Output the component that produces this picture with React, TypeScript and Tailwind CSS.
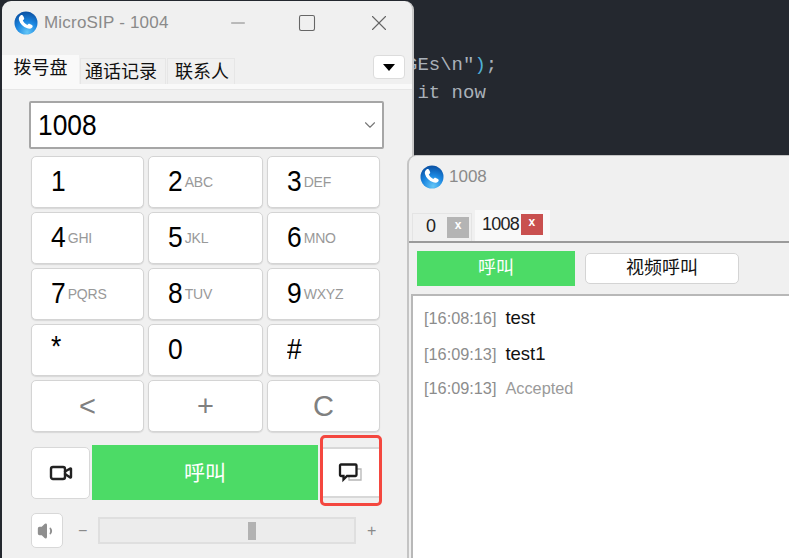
import React from 'react';
import { Minus, Square, X, ChevronDown, Video, Volume1 } from 'lucide-react';

const keys = [
  { n: '1', s: '' },
  { n: '2', s: 'ABC' },
  { n: '3', s: 'DEF' },
  { n: '4', s: 'GHI' },
  { n: '5', s: 'JKL' },
  { n: '6', s: 'MNO' },
  { n: '7', s: 'PQRS' },
  { n: '8', s: 'TUV' },
  { n: '9', s: 'WXYZ' },
  { n: '*', s: '' },
  { n: '0', s: '' },
  { n: '#', s: '' },
];

const font = 'font-["Liberation_Sans","Noto_Sans_CJK_SC",sans-serif]';

const PhoneLogo = ({ size = 24 }: { size?: number }) => (
  <svg width={size} height={size} viewBox="0 0 24 24" className="shrink-0">
    <defs>
      <radialGradient id="ball" cx="55%" cy="90%" r="85%">
        <stop offset="0%" stopColor="#63c6f7" />
        <stop offset="55%" stopColor="#1b86e0" />
        <stop offset="100%" stopColor="#0c55a8" />
      </radialGradient>
    </defs>
    <circle cx="12" cy="12" r="11.5" fill="url(#ball)" />
    <path d="M6.500 4.500c1-.8 2.200-.5 2.700.5l.9 1.900c.3.700.1 1.300-.5 1.800l-.8.600c.8 2 2.400 3.700 4.500 4.700l.8-.8c.5-.5 1.200-.6 1.800-.3l2 1.100c.9.500 1.100 1.700.3 2.500-1.200 1.300-3 1.600-4.900.8C9 16 6 12.800 5 9.100c-.5-1.800.1-3.500 1.500-4.600z" fill="#fff" />
  </svg>
);

const KeyButton = ({ n, s }: { n: string; s: string }) => (
  <button className="h-[52px] bg-white border border-[#d4d4d4] rounded-[5px] flex items-center pl-[19px] shadow-[0_1px_1px_#d8d8d8]">
    <span className={`inline-block origin-left scale-x-[0.88] text-[30px] leading-none text-black ${n === '*' ? '-mt-[8px]' : '-mt-[2px]'}`}>{n}</span>
    {s && <span className="text-[14px] text-[#999] tracking-[-0.2px]">{s}</span>}
  </button>
);

const DialerWindow = () => (
  <div className="absolute left-[2px] top-[1px] w-[412px] h-[557px] bg-[#f0f0f0] rounded-t-[9px] border-r-2 border-[#c9c9c9] overflow-hidden">
    <div className="h-[46px] flex items-center pl-[12px] pb-[2px]">
      <PhoneLogo />
      <span className="text-[17px] text-[#8a8a8a] ml-[6px] tracking-[0.2px]">MicroSIP - 1004</span>
      <Minus size={22} strokeWidth={1} className="text-[#7a7a7a] ml-[58px]" />
      <Square size={20} strokeWidth={1.3} className="text-[#666] ml-[48px]" />
      <X size={26} strokeWidth={1} className="text-[#666] ml-[49px]" />
    </div>

    <div className="h-[37px] flex items-end">
      <div className="w-[77px] h-[29px] pb-[3px] bg-[#f9f9f9] flex items-center justify-center text-[18px] text-[#111]">拨号盘</div>
      <div className="w-[86px] h-[26px] ml-[1px] pr-[4px] pt-[1px] bg-[#f0f0f0] border-t border-x border-[#e6e6e6] flex items-center justify-center text-[18px] text-[#111]">通话记录</div>
      <div className="w-[68px] h-[26px] ml-[1px] pl-[2px] pt-[1px] bg-[#f0f0f0] border-t border-x border-[#e6e6e6] flex items-center justify-center text-[18px] text-[#111]">联系人</div>
      <button className="ml-auto mr-[7px] mb-[5px] w-[32px] h-[24px] bg-white border border-[#dcdcdc] rounded-[4px] flex items-center justify-center">
        <span className="w-0 h-0 border-x-[6px] border-x-transparent border-t-[7px] border-t-black" />
      </button>
    </div>
    <div className="h-[6px] bg-[#f9f9f9] border-b border-[#e6e6e6]" />

    <div className="pl-[27px] pt-[11px]">
      <div className="w-[355px] h-[48px] bg-white border-2 border-[#a6a6a6] rounded-[2px] flex items-center justify-between pl-[7px] pr-[3px]">
        <span className="inline-block origin-left scale-x-[0.88] text-[30px] leading-none text-black">1008</span>
        <ChevronDown size={18} strokeWidth={1.5} className="text-[#777]" />
      </div>
    </div>

    <div className="pl-[29px] pt-[7px] w-[380px] grid grid-cols-[113px_115px_113px] gap-x-[4px] gap-y-[4px]">
      {keys.map((k) => (
        <KeyButton key={k.n} n={k.n} s={k.s} />
      ))}
      {['<', '+', 'C'].map((k) => (
        <button key={k} className="h-[52px] bg-white border border-[#d4d4d4] rounded-[5px] flex items-center justify-center text-[29px] leading-none text-[#808080] shadow-[0_1px_1px_#d8d8d8]">
          {k}
        </button>
      ))}
    </div>

    <div className="pl-[29px] pt-[13px] flex items-center h-[68px]">
      <button className="w-[59px] h-[52px] bg-white border border-[#d8d8d8] rounded-[5px] flex items-center justify-center">
        <Video size={24} strokeWidth={2.4} className="text-[#222]" />
      </button>
      <button className="w-[226px] h-[55px] ml-[2px] bg-[#4cdb66] text-white text-[21px] flex items-center justify-center">呼叫</button>
      <div className="relative ml-[5px] w-[56px] h-[51px] bg-white border-y-2 border-[#d8d8d8] flex items-center justify-center">
        <svg width="26" height="24" viewBox="0 0 26 24" fill="none">
          <path d="M18 8h5v11H11v-3" stroke="#b5b5b5" strokeWidth="1.3" />
          <path d="M3 3.500h14.500a1 1 0 0 1 1 1V14a1 1 0 0 1-1 1H9l-3.500 3.500V15H3a1 1 0 0 1-1-1V4.500a1 1 0 0 1 1-1z" fill="#fff" stroke="#1c1c1c" strokeWidth="2.300" />
        </svg>
        <div className="absolute -left-[3px] -top-[14px] w-[62px] h-[71px] border-[3px] border-[#f4473f] rounded-[5px]" />
      </div>
    </div>

    <div className="pl-[29px] pt-[13px] flex items-center">
      <button className="w-[32px] h-[35px] bg-white border border-[#d8d8d8] rounded-[5px] flex items-center justify-center">
        <Volume1 size={20} fill="#8f8f8f" className="text-[#8f8f8f]" />
      </button>
      <span className="text-[16px] text-[#8a8a8a] ml-[15px] w-[20px]">−</span>
      <div className="w-[258px] h-[27px] bg-[#ececec] border-2 border-[#dfdfdf] flex items-center pl-[148px]">
        <span className="w-[8px] h-[18px] bg-[#b2b2b2]" />
      </div>
      <span className="text-[16px] text-[#8a8a8a] ml-[11px]">+</span>
    </div>
  </div>
);

const MessageWindow = () => (
  <div className="absolute left-[407px] top-[155px] w-[382px] h-[403px] bg-[#f0f0f0] rounded-tl-[9px] border-l-2 border-t border-[#c4c4c4] overflow-hidden">
    <div className="h-[44px] flex items-center pl-[11px] pb-[3px]">
      <PhoneLogo />
      <span className="text-[17px] text-[#8a8a8a] ml-[5px]">1008</span>
    </div>
    <div className="h-[43px] flex items-end border-b-2 border-[#9a9a9a] pl-[3px]">
      <div className="w-[60px] h-[28px] bg-[#f0f0f0] border-t border-x border-[#e4e4e4] flex items-center pl-[13px] gap-[11px]">
        <span className="text-[18px] text-[#222] -mt-[2px]">0</span>
        <span className="w-[22px] h-[21px] bg-[#b4b4b4] text-white text-[12px] font-bold flex items-start pt-[2px] justify-center leading-none">x</span>
      </div>
      <div className="w-[75px] h-[31px] ml-[3px] bg-[#f9f9f9] flex items-start pt-[4px] pl-[7px] gap-[2px]">
        <span className="text-[18px] text-[#222] tracking-[-0.8px] -mt-[3px]">1008</span>
        <span className="w-[22px] h-[21px] bg-[#c9504f] text-white text-[12px] font-bold flex items-start pt-[2px] justify-center leading-none">x</span>
      </div>
    </div>
    <div className="h-[51px] flex items-center pl-[8px]">
      <button className="w-[158px] h-[35px] bg-[#4cdb66] text-white text-[18px] flex items-center justify-center">呼叫</button>
      <button className="w-[154px] h-[31px] ml-[10px] bg-white border border-[#d4d4d4] rounded-[5px] text-[18px] text-[#111] flex items-center justify-center">视频呼叫</button>
    </div>
    <div className="ml-[2px] h-[280px] bg-white border-t-2 border-l-2 border-[#b8b8b8] pl-[11px] pt-[4px]">
      <div className="h-[36px] flex items-center gap-[9px]">
        <span className="text-[16.3px] text-[#8c8c8c]">[16:08:16]</span>
        <span className="text-[18.5px] text-[#111]">test</span>
      </div>
      <div className="h-[36px] flex items-center gap-[9px]">
        <span className="text-[16.3px] text-[#8c8c8c]">[16:09:13]</span>
        <span className="text-[18.5px] text-[#111]">test1</span>
      </div>
      <div className="h-[32px] flex items-center gap-[9px]">
        <span className="text-[16.3px] text-[#8c8c8c]">[16:09:13]</span>
        <span className="text-[16.3px] text-[#9a9a9a]">Accepted</span>
      </div>
    </div>
  </div>
);

export default function App() {
  return (
    <div className={`relative w-[789px] h-[558px] overflow-hidden bg-[#24282f] ${font}`}>
      <pre className='absolute left-[406px] top-[51px] font-["Liberation_Mono",monospace] text-[19px] leading-[28px] text-[#aab1b9]'>
        <span>GEs\n"</span>
        <span className="text-[#4fb0d8]">)</span>
        <span>;</span>
        {'\n'}
        <span> it now</span>
      </pre>
      <DialerWindow />
      <MessageWindow />
    </div>
  );
}
